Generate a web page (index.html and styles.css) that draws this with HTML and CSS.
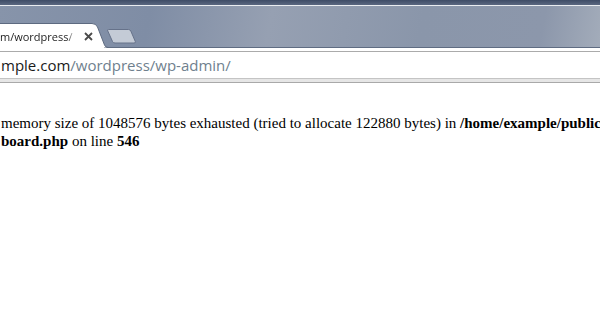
FILE: index.html
```html
<!DOCTYPE html>
<html>
<head>
<meta charset="utf-8">
<link rel="stylesheet" href="styles.css">
</head>
<body>
<div class="frame">
  <div class="topbar"></div>
  <div class="hilite"></div>
  <div class="tabstrip">
    <div class="tab">
      <svg class="tab-shape" width="108" height="25" viewBox="0 0 108 25">
        <path d="M-2 25 L-2 0.5 L92 0.5 Q96 0.5 97.5 4 L104.5 22 Q105.5 24.5 108 24.5" fill="#ffffff" stroke="#5d6a80" stroke-width="1"/>
        <rect x="-2" y="24" width="106" height="2" fill="#ffffff"/>
      </svg>
      <span class="tab-title">m/wordpress/</span>
      <span class="tab-close">
        <svg width="9" height="9" viewBox="0 0 9 9"><path d="M1 1 L8 8 M8 1 L1 8" stroke="#4a4a4a" stroke-width="1.8"/></svg>
      </span>
    </div>
    <div class="newtab">
      <svg width="32" height="16" viewBox="0 0 32 16">
        <path d="M2.5 1.5 Q1 1.5 1.8 3 L6.5 13.5 Q7.3 15 9 15 L28 15 Q30 15 29.3 13.5 L24.8 3 Q24 1.5 22.5 1.5 Z" fill="#c4cbd6" stroke="#66728a" stroke-width="1"/>
      </svg>
    </div>
  </div>
</div>
<div class="toolbar">
  <div class="omnibox"><span class="host">mple.com</span><span class="path">/wordpress/wp-admin/</span></div>
</div>
<div class="content">
  <p class="msg">memory size of 1048576 bytes exhausted (tried to allocate 122880 bytes) in <b>/home/example/public_html/wp-admin/includes/</b></p>
  <p class="msg"><b>board.php</b> on line <b>546</b></p>
</div>
</body>
</html>
```

FILE: styles.css
```css
html, body {
  margin: 0;
  padding: 0;
  background: #ffffff;
  overflow: hidden;
  width: 600px;
  height: 315px;
}
.frame {
  background: linear-gradient(100deg, #8794aa 0%, #7f8da5 25%, #96a0b2 45%, #8a96aa 70%, #8c97ab 90%, #a3acba 100%);
}
.topbar {
  height: 5px;
  background: linear-gradient(#3e4c66, #5a6780);
}
.hilite {
  height: 1px;
  background: #e9ecf0;
}
.tabstrip {
  height: 41px;
  border-bottom: 1px solid #5f6c82;
  display: flex;
  align-items: flex-end;
}
.tab {
  position: relative;
  width: 106px;
  height: 25px;
  margin-bottom: -1px;
  display: flex;
  align-items: center;
}
.tab-shape {
  position: absolute;
  left: 0;
  top: 0;
}
.tab-title {
  position: relative;
  width: 76px;
  margin-top: 1px;
  overflow: hidden;
  white-space: nowrap;
  font-family: "Open Sans", "DejaVu Sans", sans-serif;
  font-size: 11px;
  color: #1e1e1e;
  -webkit-mask-image: linear-gradient(90deg, #000 88%, transparent 100%);
  mask-image: linear-gradient(90deg, #000 88%, transparent 100%);
}
.tab-close {
  position: relative;
  margin-left: 8px;
  margin-top: 2px;
  display: flex;
}
.newtab {
  display: flex;
  margin-left: 0;
  margin-bottom: 3px;
}
.toolbar {
  background: #ffffff;
  padding-top: 3px;
  border-bottom: 1px solid #a9a9a9;
}
.omnibox {
  height: 26px;
  border-top: 1px solid #ababab;
  border-bottom: 1px solid #c4c4c4;
  display: flex;
  align-items: center;
  padding-left: 1px;
  font-family: "Open Sans", "DejaVu Sans", sans-serif;
  font-size: 15px;
  white-space: nowrap;
  box-shadow: 0 3px 0 #e6e6e6;
  margin-bottom: 3px;
}
.host {
  color: #1a1a1a;
}
.path {
  color: #6f7f8e;
}
.content {
  padding-top: 31px;
}
.msg {
  margin: 0;
  padding-left: 1px;
  font-family: "Liberation Serif", "Times New Roman", serif;
  font-size: 15px;
  line-height: 18px;
  white-space: nowrap;
  color: #000000;
}
```
